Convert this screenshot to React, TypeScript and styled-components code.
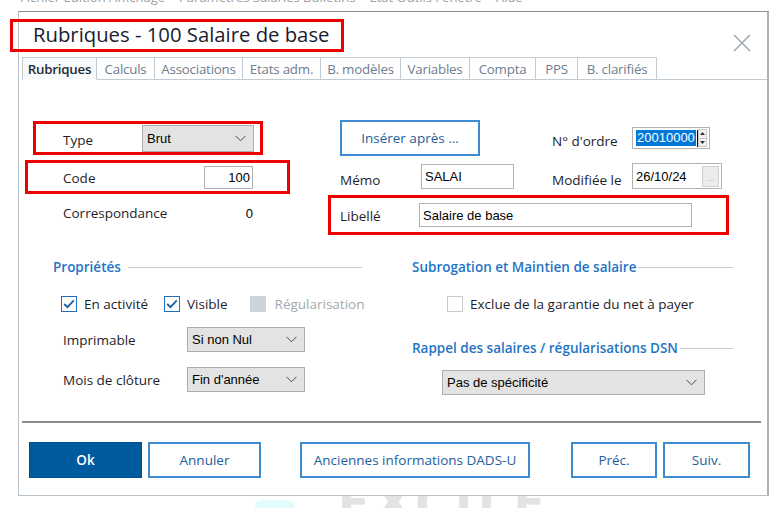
import React from "react";
import styled, { createGlobalStyle } from "styled-components";

const UI = `"Open Sans", "Noto Sans", sans-serif`;
const SYS = `"Liberation Sans", Arial, sans-serif`;

const GlobalStyle = createGlobalStyle`
  html, body { margin: 0; padding: 0; background: #fff; }
  body { font-family: ${UI}; width: 776px; height: 508px; overflow: hidden; }
  * { box-sizing: border-box; }
`;

const Page = styled.div`
  position: relative;
  width: 776px;
  height: 508px;
  overflow: hidden;
  background: #fff;
`;

const MenuStrip = styled.div`
  height: 11px;
  overflow: hidden;
  display: flex;
  align-items: flex-end;
  padding-left: 20px;
  gap: 14px;
`;

const MenuText = styled.div`
  height: 27px;
  line-height: 27px;
  font-family: ${UI};
  font-size: 13px;
  color: #a0a0a0;
  white-space: nowrap;
`;

const Watermark = styled.div`
  position: absolute;
  left: 338px;
  top: 476px;
  font-family: "DejaVu Sans", ${UI};
  font-weight: 700;
  font-size: 46px;
  letter-spacing: 6px;
  color: #e3e3e3;
  z-index: 0;
`;

const Pill = styled.div`
  position: absolute;
  left: 255px;
  top: 500px;
  width: 40px;
  height: 14px;
  border-radius: 7px;
  background: #e2fbfd;
  z-index: 0;
`;

const Window = styled.div`
  position: relative;
  z-index: 1;
  margin-left: 18px;
  width: 751px;
  height: 485px;
  background: #fff;
  border: 1px solid #b8c1c9;
  border-top-color: #8e8e8e;
  border-right: 2px solid #a9b1b8;
  display: flex;
  flex-direction: column;
`;

const TitleBar = styled.div`
  height: 45px;
  flex: none;
  display: flex;
  align-items: flex-start;
  padding: 7px 16px 0 0;
`;

const Highlight = styled.div<{ $w: number; $h: number; $ml?: number; $mt?: number; $pl?: number }>`
  border: 3px solid #ee0000;
  width: ${(p) => p.$w}px;
  height: ${(p) => p.$h}px;
  margin-left: ${(p) => p.$ml ?? 0}px;
  margin-top: ${(p) => p.$mt ?? 0}px;
  padding-left: ${(p) => p.$pl ?? 0}px;
  display: flex;
  align-items: center;
  flex: none;
`;

const TitleText = styled.div`
  font-family: ${UI};
  font-size: 20.3px;
  color: #1b1c2e;
  white-space: nowrap;
  line-height: 1;
  padding-bottom: 2px;
`;

const CloseButton = styled.div`
  margin-left: auto;
  margin-top: 15px;
  width: 18px;
  height: 18px;
  display: flex;
`;

const TabStrip = styled.div`
  height: 23px;
  flex: none;
  display: flex;
  padding-left: 3px;
`;

const TabLine = styled.div`
  flex: 1;
  border-bottom: 1px solid #c2cad2;
`;

const Tab = styled.div<{ $w: number; $active?: boolean }>`
  width: ${(p) => p.$w}px;
  height: 23px;
  border: 1px solid #c2cad2;
  border-left: ${(p) => (p.$active ? "1px solid #c2cad2" : "none")};
  border-bottom: ${(p) => (p.$active ? "1px solid #fff" : "1px solid #c2cad2")};
  background: ${(p) => (p.$active ? "#f7f9fb" : "#fff")};
  display: flex;
  align-items: center;
  justify-content: center;
  font-family: ${UI};
  font-size: 13.3px;
  font-weight: ${(p) => (p.$active ? 600 : 400)};
  color: ${(p) => (p.$active ? "#1f2a36" : "#6d7d8d")};
  white-space: nowrap;
  letter-spacing: -0.2px;
`;

const Panel = styled.div`
  height: 341px;
  flex: none;
  display: flex;
  flex-direction: column;
`;

const TopSection = styled.div`
  display: flex;
  margin-top: 40px;
  height: 115px;
`;

const LeftCol = styled.div`
  width: 303px;
  margin-left: 6px;
  display: flex;
  flex-direction: column;
`;

const RightCol = styled.div`
  display: flex;
  flex-direction: column;
`;

const Label = styled.div<{ $w?: number; $dy?: number }>`
  font-family: ${UI};
  font-size: 13.5px;
  color: #1d1e2c;
  white-space: nowrap;
  width: ${(p) => (p.$w ? `${p.$w}px` : "auto")};
  flex: ${(p) => (p.$w ? "none" : "1")};
  padding-top: ${(p) => p.$dy ?? 0}px;
`;

const Combo = styled.div<{ $w: number; $h: number }>`
  width: ${(p) => p.$w}px;
  height: ${(p) => p.$h}px;
  flex: none;
  background: #e3e3e3;
  border: 1px solid #adadad;
  display: flex;
  align-items: center;
  justify-content: space-between;
  padding: 0 7px 0 4px;
  font-family: ${SYS};
  font-size: 13px;
  color: #000;
`;

const TextBox = styled.div<{ $w: number; $h: number; $right?: boolean }>`
  width: ${(p) => p.$w}px;
  height: ${(p) => p.$h}px;
  flex: none;
  background: #fff;
  border: 1px solid #b2b2b2;
  display: flex;
  align-items: center;
  justify-content: ${(p) => (p.$right ? "flex-end" : "flex-start")};
  padding: 0 2px 0 3px;
  font-family: ${SYS};
  font-size: 13px;
  color: #000;
  white-space: nowrap;
`;

const CodeRowInner = styled.div`
  display: flex;
  align-items: center;
  width: 100%;
  padding-right: 34px;
`;

const CorrRow = styled.div`
  margin-top: 8px;
  height: 22px;
  width: 228px;
  padding-left: 38px;
  display: flex;
  align-items: center;
  justify-content: space-between;
`;

const Value = styled.div`
  font-family: ${SYS};
  font-size: 13px;
  color: #000;
`;

const FormRow = styled.div<{ $h: number; $mt?: number }>`
  height: ${(p) => p.$h}px;
  margin-top: ${(p) => p.$mt ?? 0}px;
  padding-left: 12px;
  display: flex;
  align-items: center;
`;

const Spacer = styled.div<{ $w: number }>`
  width: ${(p) => p.$w}px;
  flex: none;
`;

const OutlineButton = styled.div<{ $w: number; $h?: number }>`
  width: ${(p) => p.$w}px;
  height: ${(p) => p.$h ?? 36}px;
  flex: none;
  border: 2px solid #3d8bd3;
  background: #fff;
  display: flex;
  align-items: center;
  justify-content: center;
  font-family: ${UI};
  font-size: 13.5px;
  color: #245e9c;
  white-space: nowrap;
`;

const PrimaryButton = styled(OutlineButton)`
  background: #005a9e;
  border: 1px solid #004f8c;
  color: #fff;
  font-weight: 600;
`;

const Selected = styled.span`
  background: #0078d7;
  color: #fff;
  padding: 0 1px;
  line-height: 16px;
`;

const Caret = styled.span`
  width: 1px;
  height: 17px;
  background: #000;
  margin-left: 1px;
`;

const SpinBox = styled.div`
  margin-left: auto;
  width: 11px;
  height: 18px;
  display: flex;
  flex-direction: column;
  border: 1px solid #c9c9c9;
  background: #f3f3f3;
`;

const SpinHalf = styled.div<{ $top?: boolean }>`
  flex: 1;
  display: flex;
  align-items: center;
  justify-content: center;
  border-bottom: ${(p) => (p.$top ? "1px solid #c9c9c9" : "none")};
`;

const DotsButton = styled.div`
  margin-left: auto;
  width: 17px;
  height: 21px;
  background: #ececec;
  border: 1px solid #cfcfcf;
  display: flex;
  align-items: flex-end;
  justify-content: center;
  font-family: ${SYS};
  font-size: 9px;
  color: #b5b5b5;
  padding-bottom: 3px;
  line-height: 1;
`;

const BottomSection = styled.div`
  display: flex;
  margin-top: 20px;
  margin-left: 34px;
  gap: 50px;
`;

const Column = styled.div<{ $w: number }>`
  width: ${(p) => p.$w}px;
  display: flex;
  flex-direction: column;
`;

const SectionHeader = styled.div<{ $gap: number; $mt?: number }>`
  height: 24px;
  margin-top: ${(p) => p.$mt ?? 0}px;
  display: flex;
  align-items: center;
  gap: ${(p) => p.$gap}px;
`;

const SectionTitle = styled.div`
  font-family: ${UI};
  font-size: 13.5px;
  font-weight: 600;
  color: #1f74c4;
  white-space: nowrap;
`;

const SectionRule = styled.div`
  flex: 1;
  height: 1px;
  background: #c8cfd6;
`;

const CheckRow = styled.div<{ $pl: number }>`
  margin-top: 13px;
  height: 24px;
  padding-left: ${(p) => p.$pl}px;
  display: flex;
  align-items: center;
`;

const CheckItem = styled.div<{ $ml?: number; $gap?: number }>`
  display: flex;
  align-items: center;
  gap: ${(p) => p.$gap ?? 7}px;
  margin-left: ${(p) => p.$ml ?? 0}px;
`;

const Box = styled.div<{ $state: "on" | "off" | "disabled" }>`
  width: 16px;
  height: 16px;
  flex: none;
  display: flex;
  align-items: center;
  justify-content: center;
  background: ${(p) => (p.$state === "disabled" ? "#ccd3da" : "#fff")};
  border: 1px solid
    ${(p) => (p.$state === "on" ? "#1d6fc0" : p.$state === "disabled" ? "#ccd3da" : "#c7cbcf")};
`;

const CheckLabel = styled.div<{ $disabled?: boolean }>`
  font-family: ${UI};
  font-size: 13.5px;
  color: ${(p) => (p.$disabled ? "#a3a9ae" : "#1d1e2c")};
  white-space: nowrap;
`;

const FieldRow = styled.div<{ $mt: number; $pl?: number }>`
  margin-top: ${(p) => p.$mt}px;
  height: 25px;
  padding-left: ${(p) => p.$pl ?? 10}px;
  display: flex;
  align-items: center;
`;

const Separator = styled.div`
  height: 2px;
  flex: none;
  margin: 0 6px 0 3px;
  background: #8c8c8c;
`;

const Footer = styled.div`
  flex: 1;
  display: flex;
  align-items: flex-start;
  padding: 19px 0 0 10px;
  gap: 6px;
`;

const Chevron = () => (
  <svg width="11" height="7" viewBox="0 0 11 7">
    <polyline points="0.5,0.8 5.5,5.8 10.5,0.8" fill="none" stroke="#4a4a4a" strokeWidth="1" />
  </svg>
);

const Check = () => (
  <svg width="12" height="10" viewBox="0 0 12 10">
    <polyline points="1.2,5 4.5,8.2 10.8,1.4" fill="none" stroke="#1d5fa6" strokeWidth="1.8" />
  </svg>
);

const Tri = ({ up }: { up?: boolean }) => (
  <svg width="5" height="3" viewBox="0 0 5 3">
    <polygon points={up ? "0,3 5,3 2.5,0" : "0,0 5,0 2.5,3"} fill="#333" />
  </svg>
);

const tabs: [string, number][] = [
  ["Rubriques", 75],
  ["Calculs", 58],
  ["Associations", 88],
  ["Etats adm.", 78],
  ["B. modèles", 80],
  ["Variables", 69],
  ["Compta", 66],
  ["PPS", 42],
  ["B. clarifiés", 79],
];

export default function App() {
  return (
    <Page>
      <GlobalStyle />
      <Watermark>EXCILE</Watermark>
      <Pill />
      <MenuStrip>
        <MenuText>Fichier Édition Affichage</MenuText>
        <MenuText>Paramètres Salariés Bulletins</MenuText>
        <MenuText>État Outils Fenêtre</MenuText>
        <MenuText>Aide</MenuText>
      </MenuStrip>
      <Window>
        <TitleBar>
          <Highlight $w={334} $h={33} $ml={-9} $pl={20}>
            <TitleText>Rubriques - 100 Salaire de base</TitleText>
          </Highlight>
          <CloseButton>
            <svg width="18" height="18" viewBox="0 0 18 18">
              <path d="M1 1 L17 17 M17 1 L1 17" stroke="#9faab5" strokeWidth="1.6" fill="none" />
            </svg>
          </CloseButton>
        </TitleBar>

        <TabStrip>
          {tabs.map(([t, w], i) => (
            <Tab key={t} $w={w} $active={i === 0}>
              {t}
            </Tab>
          ))}
          <TabLine />
        </TabStrip>

        <Panel>
          <TopSection>
            <LeftCol>
              <Highlight $w={230} $h={34} $ml={8} $mt={1} $pl={27}>
                <Label $w={79} $dy={3}>Type</Label>
                <Combo $w={112} $h={27}>
                  <span>Brut</span>
                  <Chevron />
                </Combo>
              </Highlight>
              <Highlight $w={265} $h={34} $mt={5} $pl={35}>
                <CodeRowInner>
                  <Label $dy={2}>Code</Label>
                  <TextBox $w={49} $h={23} $right>
                    100
                  </TextBox>
                </CodeRowInner>
              </Highlight>
              <CorrRow>
                <Label $w={120}>Correspondance</Label>
                <Value>0</Value>
              </CorrRow>
            </LeftCol>

            <RightCol>
              <FormRow $h={36}>
                <OutlineButton $w={140}>Insérer après ...</OutlineButton>
                <Spacer $w={72} />
                <Label $w={80} $dy={5}>N° d'ordre</Label>
                <TextBox $w={78} $h={22}>
                  <Selected>20010000</Selected>
                  <Caret />
                  <SpinBox>
                    <SpinHalf $top>
                      <Tri up />
                    </SpinHalf>
                    <SpinHalf>
                      <Tri />
                    </SpinHalf>
                  </SpinBox>
                </TextBox>
              </FormRow>
              <FormRow $h={32} $mt={4}>
                <Label $w={81} $dy={8}>Mémo</Label>
                <TextBox $w={93} $h={25}>SALAI</TextBox>
                <Spacer $w={38} />
                <Label $w={80} $dy={7}>Modifiée le</Label>
                <TextBox $w={90} $h={26}>
                  26/10/24
                  <DotsButton>...</DotsButton>
                </TextBox>
              </FormRow>
              <Highlight $w={401} $h={40} $mt={3} $pl={9}>
                <Label $w={79} $dy={2}>Libellé</Label>
                <TextBox $w={273} $h={24}>Salaire de base</TextBox>
              </Highlight>
            </RightCol>
          </TopSection>

          <BottomSection>
            <Column $w={309}>
              <SectionHeader $gap={7}>
                <SectionTitle>Propriétés</SectionTitle>
                <SectionRule />
              </SectionHeader>
              <CheckRow $pl={8}>
                <CheckItem>
                  <Box $state="on">
                    <Check />
                  </Box>
                  <CheckLabel>En activité</CheckLabel>
                </CheckItem>
                <CheckItem $ml={16}>
                  <Box $state="on">
                    <Check />
                  </Box>
                  <CheckLabel>Visible</CheckLabel>
                </CheckItem>
                <CheckItem $ml={22} $gap={9}>
                  <Box $state="disabled" />
                  <CheckLabel $disabled>Régularisation</CheckLabel>
                </CheckItem>
              </CheckRow>
              <FieldRow $mt={11}>
                <Label $w={124}>Imprimable</Label>
                <Combo $w={118} $h={25}>
                  <span>Si non Nul</span>
                  <Chevron />
                </Combo>
              </FieldRow>
              <FieldRow $mt={15}>
                <Label $w={124}>Mois de clôture</Label>
                <Combo $w={118} $h={25}>
                  <span>Fin d'année</span>
                  <Chevron />
                </Combo>
              </FieldRow>
            </Column>

            <Column $w={321}>
              <SectionHeader $gap={2}>
                <SectionTitle>Subrogation et Maintien de salaire</SectionTitle>
                <SectionRule />
              </SectionHeader>
              <CheckRow $pl={35}>
                <CheckItem>
                  <Box $state="off" />
                  <CheckLabel>Exclue de la garantie du net à payer</CheckLabel>
                </CheckItem>
              </CheckRow>
              <SectionHeader $gap={2} $mt={20}>
                <SectionTitle>Rappel des salaires / régularisations DSN</SectionTitle>
                <SectionRule />
              </SectionHeader>
              <FieldRow $mt={10} $pl={30}>
                <Combo $w={263} $h={25}>
                  <span>Pas de spécificité</span>
                  <Chevron />
                </Combo>
              </FieldRow>
            </Column>
          </BottomSection>
        </Panel>

        <Separator />

        <Footer>
          <PrimaryButton $w={113}>Ok</PrimaryButton>
          <OutlineButton $w={113}>Annuler</OutlineButton>
          <Spacer $w={27} />
          <OutlineButton $w={230}>Anciennes informations DADS-U</OutlineButton>
          <Spacer $w={29} />
          <OutlineButton $w={86}>Préc.</OutlineButton>
          <OutlineButton $w={87}>Suiv.</OutlineButton>
        </Footer>
      </Window>
    </Page>
  );
}
